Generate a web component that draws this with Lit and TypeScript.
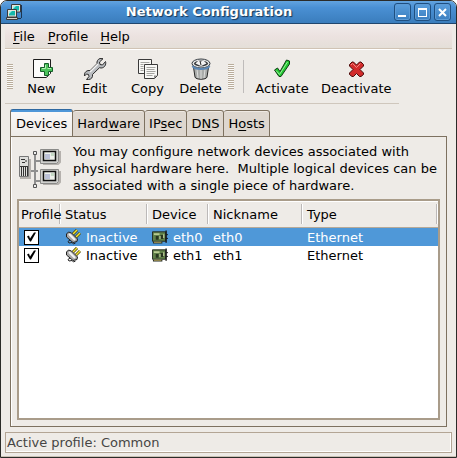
import { LitElement, html, css, svg } from "lit";
import { customElement, state } from "lit/decorators.js";

const network = svg`
  <path d="M15.500 1v13M12 14.500h3" stroke="#1d3550" />
  <path d="M5.500.5h9v7.500h-9z" fill="#e9e5dc" stroke="#3a3a3a" />
  <path d="M7 2h6v4.500H7z" fill="#16b8ac" /><path d="M7 2h3L7 5z" fill="#a7efe6" />
  <path d="M1.500 5.500h9v7.500h-9z" fill="#e9e5dc" stroke="#3a3a3a" />
  <path d="M3 7h6v4.500H3z" fill="#16b8ac" /><path d="M3 7h3L3 10z" fill="#a7efe6" />
  <path d="M.5 13.500h11v2H.5z" fill="#d9d5cc" stroke="#3a3a3a" />`;

const newDoc = svg`
  <path d="M3.500 2.500h17v14l-4 4h-13z" fill="#fcfcfb" stroke="#1c1c1c" />
  <path d="M20 17l-4 3.500V17z" fill="#aaa" />
  <path d="M14.500 6.500h4v4h4v4h-4v4h-4v-4h-4v-4h4z" fill="#4cc35c" stroke="#14602a" stroke-linejoin="round" />
  <path d="M15.500 8v3.500H12M17.500 11.500H21" stroke="#b5f2b5" fill="none" />`;

const wrench = svg`
  <path d="M17 1.500l3 .2-3.500 3.300.5 2.500 2.500.5L22.500 4.500c1 3-1 6.500-4.500 6.500l-1.500-.3-7 6.800c.5 2.500-1 5-4 5H3.500L6 19.500 5.500 17.500 3.500 17 1.500 19c-.5-3 1.500-5.500 4.500-5.500l1 .2 7-7C13.500 4.500 15 2 17 1.500z" fill="#b9bcc0" stroke="#2c2c2c" stroke-linejoin="round" />
  <path d="M7 15l8-8" stroke="#f4f4f4" stroke-width="1.500" />`;

const copy = svg`
  <g stroke="#3a3a3a" fill="#f8f8f6">
    <path d="M2.500 2.500h13v14h-13z" /><path d="M8.500 7.500h13v11l-3 3h-10z" />
  </g>
  <path d="M4.500 5.500h9M4.500 7.500h3M4.500 9.500h3M4.500 11.500h3M4.500 13.500h3M10.500 10.500h9M10.500 12.500h8M10.500 14.500h9M10.500 16.500h8M10.500 18.500h6" stroke="#a4a4a1" />
  <path d="M21 18.500l-3 3v-3z" fill="#888" />`;

const bin = svg`
  <path d="M4 7l2 13c.5 3 11.500 3 12 0l2-13z" fill="#a9aba9" stroke="#282828" />
  <path d="M8 12l1 9M12 12v10M16 12l-1 9" stroke="#dcdddc" />
  <ellipse cx="12" cy="6.500" rx="9" ry="4.500" fill="#e7e9e9" stroke="#343a40" />
  <ellipse cx="12" cy="6.500" rx="7" ry="3" fill="#3b3d3f" />
  <path d="M6.500 6.500l3-3 2.500 1 2.500-1 3 3-5.500 2.500z" fill="#f4f4f4" />
  <path d="M11 4l1 4" stroke="#222" />
  <path d="M3.500 9c2 4 15 4 17 0" stroke="#5b87b4" stroke-width="2" fill="none" />`;

const tick = svg`
  <path d="M4.500 13l3-2 2.500 3.500L16.500 3l3 1v3l-8.500 12.500H9z" fill="#22c832" stroke="#123d16" stroke-linejoin="round" />
  <path d="M6 13.500l3.500 4L17.500 5" stroke="#9cf09c" fill="none" />`;

const cross = svg`
  <path d="M5.500 7.500l2.500-2.500h1.500l3 3 3-3H17l2.500 2.500V9l-3.500 3.500 3.500 3.500v1.500L17 19.500h-1.500l-3-3-3 3H8L5.500 17.500V16L9 12.500 5.500 9z" fill="#d22b2b" stroke="#4b0a0a" stroke-linejoin="round" />
  <path d="M7 8l1.500-1.500 4 4 4-4" stroke="#f28a84" fill="none" />`;

const topology = svg`
  <path d="M14 22h9M20 5v31M20 12h7M20 32h7" stroke="#8f8f8f" stroke-width="2" fill="none" />
  <path d="M18.500 2.500h3v3h-3zM18.500 35.500h3v3h-3z" fill="#eee" stroke="#555" />
  <path d="M5 29h10V10" stroke="#b5b1ad" stroke-width="2" fill="none" />
  <path d="M4.500 7.500h9v20h-9z" fill="#dededc" stroke="#777" />
  <path d="M6 10.500h4M7 13.500h3M10 12h2" stroke="#333" />
  <path d="M6.500 18v9M8.500 18v9M10.500 18v9M12.500 18v9M5 17.500h8" stroke="#333" />
  <path d="M28 15h15l2-2V2M28 35h15l2-2V22" stroke="#b5b1ad" stroke-width="2" fill="none" />
  <path d="M25.500.5h18v12l-2 2h-16zM25.500 20.500h18v12l-2 2h-16z" fill="#d0d0ce" stroke="#8a8a88" />
  <path d="M28.500 2.500h12v9h-12zM28.500 22.500h12v9h-12z" fill="#eef1ec" stroke="#111" stroke-width="1.500" />
  <path d="M30 5h5v5h-5zM30 25h5v5h-5z" fill="#bcc2d8" />
  <path d="M36 4h3v3h-3zM36 24h3v3h-3z" fill="#c5d9c5" />`;

const plug = svg`
  <path d="M8 5l4-4M11 8l4-4" stroke="#4a4310" stroke-width="3" />
  <path d="M8 5l4-4M11 8l4-4" stroke="#f4e32c" stroke-width="1.500" />
  <path d="M1.500 5l2-2 3 1 6 6-.5 2.500-4 1L1.500 8z" fill="#a9a9a9" stroke="#222" stroke-linejoin="round" />
  <path d="M4 5l6 6" stroke="#f3f3f3" stroke-width="2" />
  <path d="M5 11l-2 1.500 1 1.500 3-.5 1.500 1.500 2-1" stroke="#222" fill="none" />`;

const card = svg`
  <path d="M.5 2.500h14v10H.5z" fill="#5f8048" stroke="#202820" />
  <path d="M2 4h6v2H2z" fill="#b8ca91" />
  <path d="M4 7h3v4H4zM9 6h3v4H9z" fill="#27351f" />
  <path d="M8 7h1v3H8zM12 5h1v4h-1z" fill="#d6dfb0" />
  <path d="M1 14h10" stroke="#202820" stroke-width="2" /><path d="M2 13.500h8" stroke="#cfb964" />
  <path d="M15 1v13" stroke="#161616" stroke-width="1.500" /><path d="M15 5.500h2M15 9.500h2" stroke="#161616" />`;

type Tool = { label: string; icon: unknown };
type Label = [before: string, key: string, after: string];

@customElement("tool-button")
export class ToolButton extends LitElement {
  static properties = { label: {}, icon: { attribute: false } };
  declare label: string;
  declare icon: unknown;

  static styles = css`
    :host {
      display: block;
    }
    .tool {
      display: flex;
      flex-direction: column;
      align-items: center;
      box-sizing: border-box;
      width: 100%;
      padding: 0 6px;
      border: 0;
      background: none;
      color: #000;
      font: 13px/16px "DejaVu Sans", sans-serif;
    }
    .icon {
      width: 24px;
      height: 24px;
    }
  `;

  render() {
    return html`<button class="tool" type="button">
      <svg class="icon" viewBox="0 0 24 24" fill="none" aria-hidden="true">${this.icon}</svg>
      ${this.label}
    </button>`;
  }
}

@customElement("app-root")
export class AppRoot extends LitElement {
  @state() private tab = 0;
  @state() private selected = 0;

  private menus: Label[] = [["", "F", "ile"], ["", "P", "rofile"], ["", "H", "elp"]];
  private tabs: Label[] = [
    ["Dev", "i", "ces"],
    ["Hard", "w", "are"],
    ["IP", "s", "ec"],
    ["D", "N", "S"],
    ["H", "o", "sts"],
  ];
  private editing: Tool[] = [
    { label: "New", icon: newDoc },
    { label: "Edit", icon: wrench },
    { label: "Copy", icon: copy },
    { label: "Delete", icon: bin },
  ];
  private control: Tool[] = [
    { label: "Activate", icon: tick },
    { label: "Deactivate", icon: cross },
  ];
  private devices = ["eth0", "eth1"];

  static styles = css`
    :host {
      display: block;
      background: #fff;
      color: #000;
      font: 13px/17px "DejaVu Sans", sans-serif;
    }
    button {
      margin: 0;
      color: inherit;
      font: inherit;
    }
    u {
      text-underline-offset: 2px;
      text-decoration-thickness: 1px;
    }
    .window {
      display: flex;
      flex-direction: column;
      box-sizing: border-box;
      min-height: 100vh;
      border: 1px solid #2b2b28;
      border-radius: 7px 7px 0 0;
      background: #eeebe7;
      overflow: hidden;
    }
    .titlebar {
      display: flex;
      align-items: center;
      gap: 3px;
      height: 22px;
      padding: 0 5px;
      border-bottom: 1px solid #20466e;
      background: linear-gradient(#62a3df, #4a90d4 30%, #3a7dbd);
    }
    .logo {
      width: 16px;
      height: 16px;
    }
    .title {
      flex: 1;
      margin: 0;
      color: #fff;
      font-size: 13px;
      line-height: 22px;
      padding-left: 2px;
      text-align: center;
      text-shadow: 1px 1px 1px #173453;
    }
    .control {
      display: grid;
      place-items: center;
      width: 17px;
      height: 18px;
      padding: 0;
      border: 1px solid #1f4f80;
      border-radius: 3px;
      background: linear-gradient(#5b9fdd, #3b7fc0);
      box-shadow: inset 0 0 0 1px #5c9bd6;
    }
    .glyph {
      width: 11px;
      height: 11px;
    }
    .body {
      display: flex;
      flex: 1;
      flex-direction: column;
      padding: 0 4px 3px;
      border-bottom: 1px solid #c9c0b4;
    }
    .menubar {
      display: flex;
      height: 24px;
      border-bottom: 1px solid #d0c3b4;
      background: linear-gradient(#f1eceb, #ece2e0 50%, #e4dfd8);
    }
    .menu {
      padding: 0 7px 0 8px;
      border: 0;
      background: none;
    }
    .menu + .menu {
      padding: 0 6px;
    }
    .toolbar {
      display: flex;
      align-items: center;
      align-self: flex-start;
      box-sizing: border-box;
      max-width: 100%;
      height: 55px;
      padding: 0 1px;
      border-top: 1px solid #fff;
      border-bottom: 1px solid #cfc7bd;
    }
    .grip {
      width: 6px;
      height: 25px;
      margin: 0 2px 0 1px;
      background: repeating-linear-gradient(#b9ad9c 0 1px, #fbfaf8 1px 2px);
    }
    .edit-tool {
      width: 53px;
    }
    .rule {
      width: 1px;
      height: 33px;
      margin: 0 5px 0 7px;
      background: #bfbcbb;
    }
    .control-tool {
      min-width: 66px;
    }
    .notebook {
      display: flex;
      flex: 1;
      flex-direction: column;
      padding: 5px;
    }
    .tabs {
      display: flex;
      align-items: flex-end;
      margin-bottom: -1px;
    }
    .tab {
      height: 27px;
      padding: 0 4px;
      border: 1px solid #7d7160;
      border-left-width: 0;
      border-radius: 3px 3px 0 0;
      background: #ded7cf;
      box-shadow: inset 0 1px #efe9e3;
    }
    .tab[aria-selected="true"] {
      height: 28px;
      padding: 0 5px;
      border-left-width: 1px;
      border-top-color: #2f68a0;
      border-bottom-color: #eeebe7;
      background: linear-gradient(#4f97d8 2px, #faf8f7 2px, #eeebe7);
      box-shadow: none;
    }
    .panel {
      display: flex;
      flex: 1;
      flex-direction: column;
      padding: 6px;
      border: 1px solid #7d7160;
      box-shadow: inset 1px 0 #fff;
    }
    .intro {
      display: flex;
      align-items: center;
      gap: 8px;
      padding-bottom: 5px;
    }
    .topology {
      flex: none;
      width: 48px;
      height: 48px;
    }
    .text {
      margin: 0;
      white-space: pre-line;
    }
    .list {
      flex: 1;
      border: 2px solid #a99c8a;
      background: #fff;
    }
    .table {
      width: 100%;
      border-collapse: separate;
      border-spacing: 0;
      table-layout: fixed;
    }
    .c1 {
      width: 42px;
    }
    .c2 {
      width: 87px;
    }
    .c3 {
      width: 61px;
    }
    .c4 {
      width: 94px;
    }
    th {
      height: 26px;
      padding: 0 0 0 4px;
      border-bottom: 1px solid #b5a999;
      background:
        linear-gradient(#bcb9b8, #bcb9b8) right 1px center / 1px 20px no-repeat,
        linear-gradient(#fff, #fff) right center / 1px 20px no-repeat,
        #eeebe7;
      box-shadow: inset 0 1px #fff;
      font-weight: 400;
      text-align: left;
      white-space: nowrap;
    }
    th:first-child {
      padding-left: 2px;
    }
    td {
      height: 18px;
      padding: 0 0 0 4px;
      white-space: nowrap;
    }
    .selected td {
      background: #4f98d8;
      color: #fff;
    }
    .cell {
      display: flex;
      align-items: center;
      gap: 5px;
      height: 18px;
    }
    .device {
      width: 16px;
      height: 16px;
    }
    .check {
      display: block;
      appearance: none;
      box-sizing: border-box;
      width: 15px;
      height: 15px;
      margin: 0 1px;
      border: 1px solid #000;
      background: #fff;
    }
    .check:checked::after {
      content: "";
      display: block;
      width: 13px;
      height: 13px;
      background: #000;
      clip-path: polygon(2px 6px, 4px 5px, 5px 8px, 9px 2px, 11px 2px, 6px 11px, 5px 11px);
    }
    .status {
      height: 19px;
      border: 1px solid #b3a595;
      padding: 0 1px;
      color: #464544;
      line-height: 19px;
      box-shadow: inset -1px -1px #fff;
    }
  `;

  private mnemonic([before, key, after]: Label) {
    return html`${before}<u>${key}</u>${after}`;
  }

  private windowButton(name: string, glyph: unknown) {
    return html`<button class="control" type="button" aria-label=${name}>
      <svg class="glyph" viewBox="0 0 11 11" fill="none" stroke="#fff" stroke-width="2" aria-hidden="true">
        ${glyph}
      </svg>
    </button>`;
  }

  private row(name: string, index: number) {
    return html`<tr class=${index === this.selected ? "selected" : ""} @click=${() => (this.selected = index)}>
      <td><input class="check" type="checkbox" checked aria-label="Profile ${name}" /></td>
      <td>
        <div class="cell">
          <svg class="device" viewBox="0 0 16 16" fill="none" aria-hidden="true">${plug}</svg>Inactive
        </div>
      </td>
      <td>
        <div class="cell">
          <svg class="device" viewBox="0 0 17 16" fill="none" aria-hidden="true">${card}</svg>${name}
        </div>
      </td>
      <td>${name}</td>
      <td>Ethernet</td>
    </tr>`;
  }

  render() {
    return html`<div class="window">
      <header class="titlebar">
        <svg class="logo" viewBox="0 0 16 16" fill="none" aria-hidden="true">${network}</svg>
        <h1 class="title">Network Configuration</h1>
        ${this.windowButton("Minimize", svg`<path d="M1 9h8" />`)}
        ${this.windowButton("Maximize", svg`<path d="M2 9.500h7M1.500 2v8M9.500 2v8" stroke-width="1" /><path d="M1 2h9" />`)}
        ${this.windowButton("Close", svg`<path d="M2 2l7 7M9 2l-7 7" />`)}
      </header>
      <div class="body">
        <nav class="menubar">
          ${this.menus.map((menu) => html`<button class="menu" type="button">${this.mnemonic(menu)}</button>`)}
        </nav>
        <div class="toolbar" role="toolbar">
          <span class="grip"></span>
          ${this.editing.map((t) => html`<tool-button class="edit-tool" .label=${t.label} .icon=${t.icon}></tool-button>`)}
          <span class="grip"></span>
          <span class="rule"></span>
          ${this.control.map((t) => html`<tool-button class="control-tool" .label=${t.label} .icon=${t.icon}></tool-button>`)}
        </div>
        <main class="notebook">
          <div class="tabs" role="tablist">
            ${this.tabs.map(
              (tab, i) => html`<button
                class="tab"
                type="button"
                role="tab"
                aria-selected=${i === this.tab ? "true" : "false"}
                @click=${() => (this.tab = i)}
              >${this.mnemonic(tab)}</button>`,
            )}
          </div>
          <section class="panel" role="tabpanel">
            <div class="intro">
              <svg class="topology" viewBox="2 -4 48 48" fill="none" aria-hidden="true">${topology}</svg>
              <p class="text">${"You may configure network devices associated with\nphysical hardware here. \u00a0Multiple logical devices can be\nassociated with a single piece of hardware."}</p>
            </div>
            <div class="list">
              <table class="table">
                <colgroup>
                  <col class="c1" /><col class="c2" /><col class="c3" /><col class="c4" /><col />
                </colgroup>
                <thead>
                  <tr><th>Profile</th><th>Status</th><th>Device</th><th>Nickname</th><th>Type</th></tr>
                </thead>
                <tbody>${this.devices.map((name, i) => this.row(name, i))}</tbody>
              </table>
            </div>
          </section>
        </main>
        <footer class="status">Active profile: Common</footer>
      </div>
    </div>`;
  }
}
